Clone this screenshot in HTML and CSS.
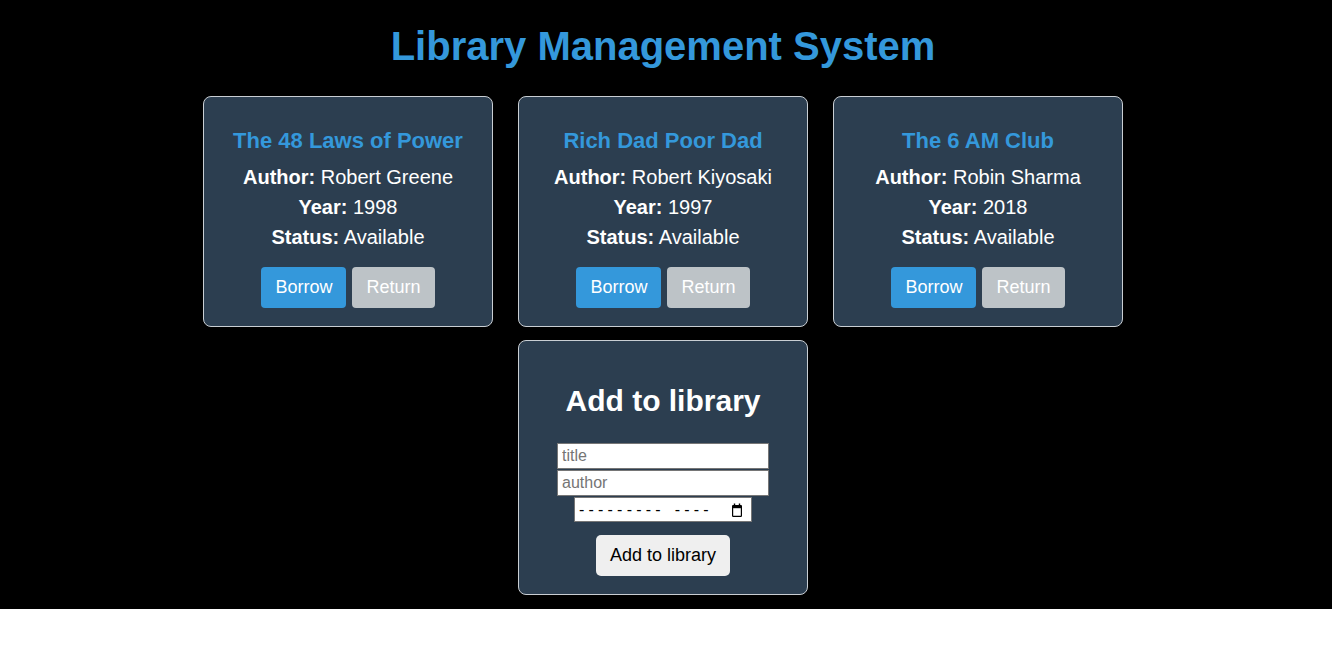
FILE: index.html
```html
<!DOCTYPE html>
<html lang="en">
<head>
<meta charset="utf-8">
<title>Library Management System</title>
<link rel="stylesheet" href="styles.css">
</head>
<body>
<div class="app">
  <h1 class="page-title">Library Management System</h1>
  <div class="grid">
    <div class="card book">
      <h3 class="book-title">The 48 Laws of Power</h3>
      <p class="meta"><b>Author:</b> Robert Greene</p>
      <p class="meta"><b>Year:</b> 1998</p>
      <p class="meta"><b>Status:</b> Available</p>
      <div class="actions">
        <button class="btn btn-borrow">Borrow</button>
        <button class="btn btn-return">Return</button>
      </div>
    </div>
    <div class="card book">
      <h3 class="book-title">Rich Dad Poor Dad</h3>
      <p class="meta"><b>Author:</b> Robert Kiyosaki</p>
      <p class="meta"><b>Year:</b> 1997</p>
      <p class="meta"><b>Status:</b> Available</p>
      <div class="actions">
        <button class="btn btn-borrow">Borrow</button>
        <button class="btn btn-return">Return</button>
      </div>
    </div>
    <div class="card book">
      <h3 class="book-title">The 6 AM Club</h3>
      <p class="meta"><b>Author:</b> Robin Sharma</p>
      <p class="meta"><b>Year:</b> 2018</p>
      <p class="meta"><b>Status:</b> Available</p>
      <div class="actions">
        <button class="btn btn-borrow">Borrow</button>
        <button class="btn btn-return">Return</button>
      </div>
    </div>
    <div class="card add-card">
      <h2 class="add-title">Add to library</h2>
      <div class="form">
        <input class="field field-text" type="text" placeholder="title">
        <input class="field field-text field-author" type="text" placeholder="author">
        <label class="field month-field" aria-label="month">
          <span class="month-text"><span class="seg">---------</span><span class="seg seg-year">----</span></span>
          <svg class="cal-icon" width="10" height="14" viewBox="0 0 10 14" aria-hidden="true">
            <rect x="1.8" y="0.5" width="1.4" height="2.5" fill="#000"/>
            <rect x="6.8" y="0.5" width="1.4" height="2.5" fill="#000"/>
            <rect x="0.6" y="2.6" width="8.8" height="10.8" rx="0.6" fill="none" stroke="#000" stroke-width="1.2"/>
            <rect x="0.6" y="2.6" width="8.8" height="2.6" fill="#000"/>
          </svg>
        </label>
        <button class="btn btn-add">Add to library</button>
      </div>
    </div>
  </div>
</div>
</body>
</html>
```
FILE: styles.css
```css
html, body {
  margin: 0;
  padding: 0;
  background: #ffffff;
}

body {
  font-family: "Liberation Sans", Arial, sans-serif;
}

.app {
  background: #000000;
  padding: 0 6px 14px 0;
}

.page-title {
  margin: 0;
  padding: 23px 0 27px;
  font-size: 40px;
  line-height: 46px;
  font-weight: bold;
  color: #3498db;
  text-align: center;
}

.grid {
  display: flex;
  flex-wrap: wrap;
  justify-content: center;
  align-items: flex-start;
  column-gap: 25px;
  row-gap: 13px;
  max-width: 920px;
  margin: 0 auto;
}

.card {
  box-sizing: border-box;
  width: 290px;
  background: #2c3e50;
  border: 1px solid #c9ced3;
  border-radius: 8px;
  padding: 18px;
  text-align: center;
  color: #ffffff;
}

.book-title {
  margin: 13px 0 13px;
  font-size: 22px;
  line-height: 25px;
  font-weight: bold;
  color: #3498db;
}

.meta {
  margin: 0 0 7px;
  font-size: 20px;
  line-height: 23px;
}

.meta:last-of-type {
  margin-bottom: 0;
}

.actions {
  display: flex;
  justify-content: center;
  gap: 6px;
  margin-top: 18px;
}

.btn {
  font-family: "Liberation Sans", Arial, sans-serif;
  font-size: 18px;
  line-height: 21px;
  padding: 10px 14px;
  border: none;
  border-radius: 4px;
  cursor: pointer;
}

.btn-borrow {
  background: #3498db;
  color: #ffffff;
}

.btn-return {
  background: #bdc3c7;
  color: #ffffff;
}

.add-title {
  margin: 25px 0 25px;
  font-size: 30px;
  line-height: 34px;
  font-weight: bold;
  color: #ffffff;
}

.form {
  display: flex;
  flex-direction: column;
  align-items: center;
}

.field {
  box-sizing: border-box;
  font-family: "Liberation Sans", Arial, sans-serif;
  font-size: 16px;
  border: 1px solid #767676;
  background: #ffffff;
  color: #000000;
  margin: 0;
}

.field-text {
  width: 212px;
  height: 26px;
  padding: 0 4px;
}

.field-author {
  margin-top: 1px;
}

.month-field {
  display: flex;
  align-items: center;
  justify-content: space-between;
  width: 178px;
  height: 25px;
  padding: 0 9px 0 4px;
  margin-top: 1px;
  text-align: left;
}

.month-text {
  display: flex;
  font-size: 16px;
  line-height: 18px;
  letter-spacing: 4.2px;
  white-space: pre;
}

.seg-year {
  margin-left: 10px;
}

.cal-icon {
  display: block;
  flex: none;
}

.btn-add {
  margin-top: 13px;
  background: #efefef;
  color: #000000;
  border-radius: 5px;
}
```
